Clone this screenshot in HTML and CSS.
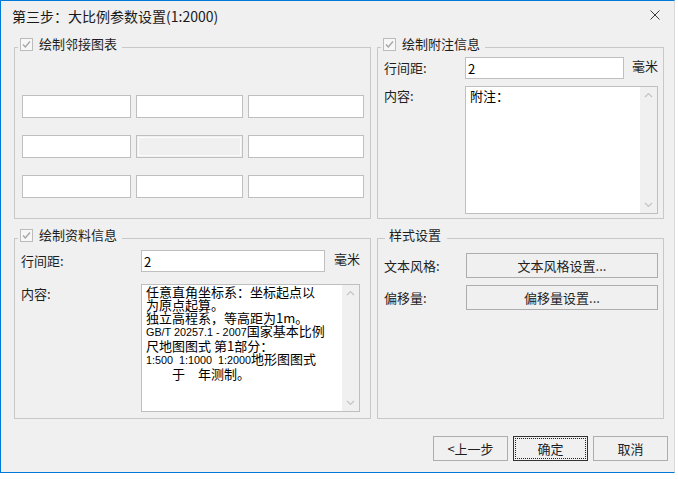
FILE: index.html
```html
<!DOCTYPE html>
<html lang="zh-CN">
<head>
  <meta charset="UTF-8">
  <title>第三步：大比例参数设置(1:2000)</title>
  <link rel="stylesheet" href="styles.css">
</head>
<body>
  <div class="dialog">
    <div class="titlebar">
      <span class="title">第三步：大比例参数设置(1:2000)</span>
      <svg class="close" width="10" height="10" viewBox="0 0 10 10">
        <path d="M0.5 0.5 L9.5 9.5 M9.5 0.5 L0.5 9.5" stroke="#3a3a3a" stroke-width="1" fill="none"/>
      </svg>
    </div>

    <div class="main">
      <!-- 邻接图表 -->
      <div class="group">
        <div class="group-title">
          <svg class="check" width="13" height="13" viewBox="0 0 13 13">
            <rect x="0.5" y="0.5" width="12" height="12" fill="#f7f7f7" stroke="#bcbcbc"/>
            <path d="M3 6.5 L5.3 9 L10 3.5" stroke="#a6a6a6" stroke-width="1.4" fill="none"/>
          </svg>
          <span>绘制邻接图表</span>
        </div>
        <div class="neighbors">
          <input class="field" type="text">
          <input class="field" type="text">
          <input class="field" type="text">
          <input class="field" type="text">
          <input class="field" type="text" disabled>
          <input class="field" type="text">
          <input class="field" type="text">
          <input class="field" type="text">
          <input class="field" type="text">
        </div>
      </div>

      <!-- 附注信息 -->
      <div class="group">
        <div class="group-title">
          <svg class="check" width="13" height="13" viewBox="0 0 13 13">
            <rect x="0.5" y="0.5" width="12" height="12" fill="#f7f7f7" stroke="#bcbcbc"/>
            <path d="M3 6.5 L5.3 9 L10 3.5" stroke="#a6a6a6" stroke-width="1.4" fill="none"/>
          </svg>
          <span>绘制附注信息</span>
        </div>
        <div class="form form-note">
          <label class="lbl">行间距:</label>
          <input class="field" type="text" value="2">
          <span class="unit">毫米</span>
          <label class="lbl lbl-top">内容:</label>
          <div class="memo memo-note">
            <div class="memo-text">附注：</div>
            <div class="vscroll">
              <svg width="17" height="17" viewBox="0 0 17 17"><polyline points="5,10 8.5,6.5 12,10" stroke="#c4c4c4" stroke-width="1.2" fill="none"/></svg>
              <svg width="17" height="17" viewBox="0 0 17 17"><polyline points="5,7 8.5,10.5 12,7" stroke="#c4c4c4" stroke-width="1.2" fill="none"/></svg>
            </div>
          </div>
        </div>
      </div>

      <!-- 资料信息 -->
      <div class="group">
        <div class="group-title">
          <svg class="check" width="13" height="13" viewBox="0 0 13 13">
            <rect x="0.5" y="0.5" width="12" height="12" fill="#f7f7f7" stroke="#bcbcbc"/>
            <path d="M3 6.5 L5.3 9 L10 3.5" stroke="#a6a6a6" stroke-width="1.4" fill="none"/>
          </svg>
          <span>绘制资料信息</span>
        </div>
        <div class="form form-info">
          <label class="lbl">行间距:</label>
          <input class="field" type="text" value="2">
          <span class="unit">毫米</span>
          <label class="lbl lbl-top">内容:</label>
          <div class="memo memo-info">
            <div class="memo-text">任意直角坐标系：坐标起点以
为原点起算。
独立高程系，等高距为1m。
<span class="lat">GB/T 20257.1 - 2007</span>国家基本比例
尺地图图式 第1部分：
<span class="lat">1:500  1:1000  1:2000</span>地形图图式
　　于　年测制。</div>
            <div class="vscroll">
              <svg width="17" height="17" viewBox="0 0 17 17"><polyline points="5,10 8.5,6.5 12,10" stroke="#c4c4c4" stroke-width="1.2" fill="none"/></svg>
              <svg width="17" height="17" viewBox="0 0 17 17"><polyline points="5,7 8.5,10.5 12,7" stroke="#c4c4c4" stroke-width="1.2" fill="none"/></svg>
            </div>
          </div>
        </div>
      </div>

      <!-- 样式设置 -->
      <div class="group">
        <div class="group-title plain">样式设置</div>
        <div class="form form-style">
          <label class="lbl">文本风格:</label>
          <button class="btn">文本风格设置...</button>
          <label class="lbl">偏移量:</label>
          <button class="btn">偏移量设置...</button>
        </div>
      </div>
    </div>

    <div class="footer">
      <button class="btn btn-foot">&lt;上一步</button>
      <button class="btn btn-foot btn-default">确定</button>
      <button class="btn btn-foot">取消</button>
    </div>
  </div>
</body>
</html>
```

FILE: styles.css
```css
* {
  box-sizing: border-box;
}
body {
  margin: 0;
  background: #fff;
  font-family: "Noto Sans CJK SC", "Noto Sans", sans-serif;
  font-size: 13px;
  color: #1e1e1e;
}
.dialog {
  width: 675px;
  height: 473px;
  background: #f0f0f0;
  border: 1px solid #0078d7;
  border-right-color: #d9d9d9;
}
.titlebar {
  height: 30px;
  display: flex;
  align-items: center;
  justify-content: space-between;
  padding: 0 14px 0 11px;
}
.title {
  font-size: 14px;
  line-height: 20px;
  color: #1a1a1a;
}
.close {
  display: block;
  margin-top: -3px;
}
.main {
  display: grid;
  grid-template-columns: 357px 287px;
  grid-template-rows: 172px 181px;
  gap: 19px 6px;
  padding: 16px 0 0 13px;
}
.group {
  border: 1px solid #c8c8c8;
}
.group-title {
  display: flex;
  align-items: center;
  gap: 6px;
  width: fit-content;
  margin: -14px 0 0 3px;
  padding: 0 5px 0 2px;
  line-height: 20px;
  background: #f0f0f0;
}
.group-title.plain {
  margin-left: 7px;
  padding: 0 6px 0 4px;
}
.check {
  display: block;
  flex: none;
}
.neighbors {
  display: grid;
  grid-template-columns: 109px 107px 116px;
  grid-template-rows: repeat(3, 23px);
  gap: 17px 5px;
  margin: 41px 0 0 7px;
}
.field {
  display: block;
  width: 100%;
  height: 100%;
  margin: 0;
  border: 1px solid #bfbfbf;
  background: #fff;
  padding: 0 2px;
  font: inherit;
  color: #000;
  outline: none;
}
.field:disabled {
  background: #f0f0f0;
  box-shadow: inset 0 0 0 1px #f0f0f0, inset 0 0 0 2px #fbfbfb;
}
.form {
  display: grid;
  align-items: center;
  justify-content: start;
  padding-left: 6px;
}
.form-note {
  grid-template-columns: 81px 159px auto;
  grid-template-rows: 22px 128px;
  row-gap: 7px;
  margin-top: 3px;
}
.form-note .unit {
  margin-left: 8px;
}
.form-info {
  grid-template-columns: 120px 184px auto;
  grid-template-rows: 22px 128px;
  row-gap: 12px;
  margin-top: 5px;
}
.form-info .unit {
  margin-left: 9px;
}
.form-style {
  grid-template-columns: 82px 192px;
  grid-template-rows: 25px 25px;
  row-gap: 7px;
  margin-top: 8px;
}
.lbl {
  line-height: 20px;
  white-space: nowrap;
}
.lbl-top {
  align-self: start;
}
.unit {
  line-height: 20px;
  white-space: nowrap;
  margin-top: -4px;
}
.memo {
  grid-column: 2 / 4;
  display: flex;
  height: 128px;
  border: 1px solid #bfbfbf;
  background: #fff;
}
.memo-note {
  width: 193px;
}
.memo-info {
  width: 219px;
}
.memo-text {
  flex: 1;
  padding: 0 4px;
  line-height: 13px;
  white-space: pre;
  overflow: hidden;
  color: #000;
}
.memo-note .memo-text {
  padding-top: 2px;
}
.lat {
  font-family: "Liberation Sans", Arial, sans-serif;
  font-size: 10.8px;
}
.vscroll {
  width: 17px;
  flex: none;
  background: #f0f0f0;
  display: flex;
  flex-direction: column;
  justify-content: space-between;
}
.vscroll svg {
  display: block;
}
.btn {
  height: 100%;
  margin: 0;
  padding: 0;
  border: 1px solid #adadad;
  background: #f0f0f0;
  font: inherit;
  color: #1e1e1e;
  line-height: 20px;
}
.footer {
  display: flex;
  justify-content: flex-end;
  gap: 5px;
  margin-top: 17px;
  padding-right: 6px;
}
.btn-foot {
  width: 75px;
  height: 25px;
}
.btn-default {
  border-color: #333;
  outline: 1px dotted #222;
  outline-offset: -3px;
}
```
